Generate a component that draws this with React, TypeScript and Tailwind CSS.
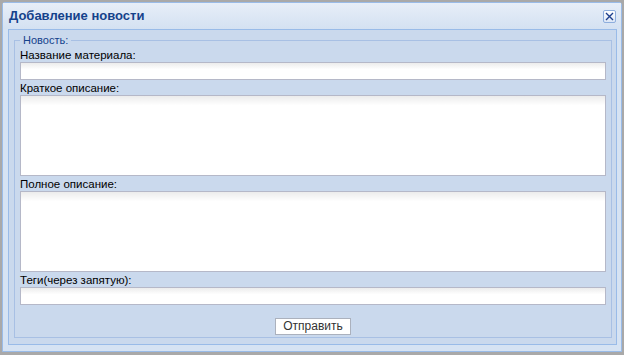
import React from 'react';

const font = { fontFamily: '"Liberation Sans", Arial, sans-serif' };

const Label: React.FC<{ text: string }> = ({ text }) => (
  <div className="h-[15px] text-[11.5px] leading-[15px] text-black pt-[1px]">{text}</div>
);

const Input: React.FC = () => (
  <div className="h-[18px] border border-[#b5b8c8] bg-gradient-to-b from-[#ececec] to-white to-[40%]" />
);

const Area: React.FC = () => (
  <div className="h-[81px] border border-[#b5b8c8] bg-gradient-to-b from-[#ececec] to-white to-[12%]" />
);

const App: React.FC = () => {
  return (
    <div className="w-[624px] h-[355px] bg-[#a9a9a9] pl-[2px] pt-[2px]" style={font}>
      <div className="w-[620px] h-[350px] border border-[#99bbe8] rounded-t-[3px] bg-[#d6e3f3] flex flex-col">
        {/* header */}
        <div className="h-[26px] flex items-center justify-between pl-[6px] pr-[5px] bg-gradient-to-b from-[#e7eef8] to-[#d4e1f2]">
          <span className="text-[13px] font-bold text-[#15428b] leading-none pb-[1px]">Добавление новости</span>
          <div className="w-[13px] h-[13px] mt-[1px] rounded-[2px] border border-[#8eaedd] bg-gradient-to-b from-white to-[#dbe6f6] flex items-center justify-center">
            <svg width="9" height="9" viewBox="0 0 9 9">
              <path d="M1 1 L8 8 M8 1 L1 8" stroke="#1f3f8c" strokeWidth="1.4" />
            </svg>
          </div>
        </div>
        {/* body */}
        <div className="ml-[5px] mr-[4px] h-[316px] border border-[#99bbe8] bg-[#cad9ed] pl-[5px] pr-[4px] pt-[3px]">
          <fieldset className="border border-[#a8c0e4] px-[5px] pb-[2px] h-[305px]">
            <legend className="px-[3px] text-[11px] leading-[14px] text-[#15428b]">Новость:</legend>
            <div className="flex flex-col">
              <Label text="Название материала:" />
              <Input />
              <Label text="Краткое описание:" />
              <Area />
              <Label text="Полное описание:" />
              <Area />
              <Label text="Теги(через запятую):" />
              <Input />
              <div className="flex justify-center mt-[13px]">
                <button className="w-[76px] h-[17px] border border-[#abb1bd] bg-white text-[12px] leading-[15px] text-[#333]">
                  Отправить
                </button>
              </div>
            </div>
          </fieldset>
        </div>
      </div>
    </div>
  );
};

export default App;
